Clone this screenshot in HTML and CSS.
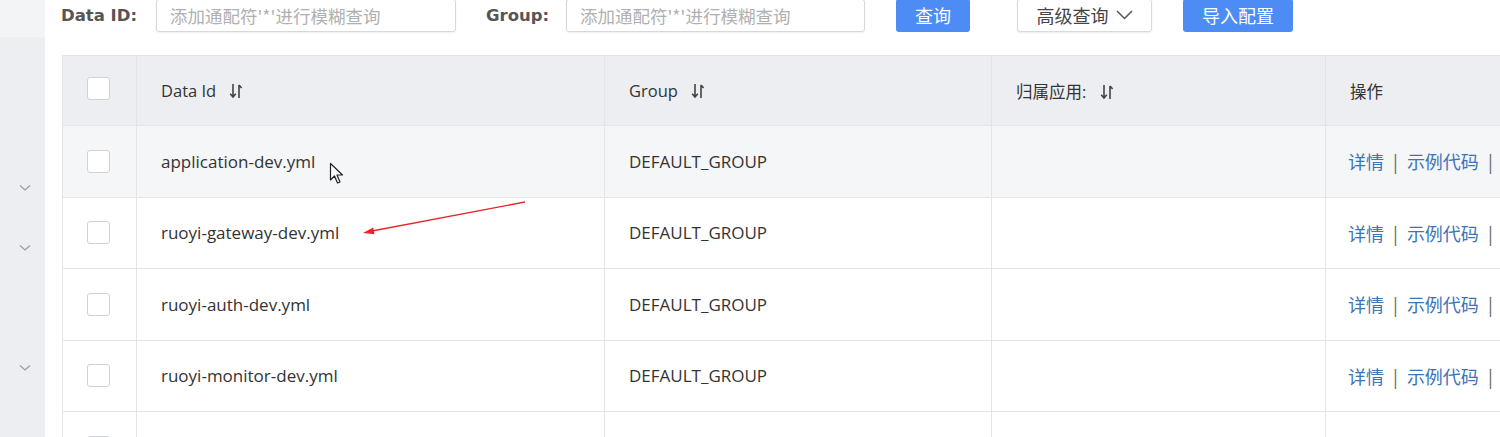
FILE: index.html
```html
<!DOCTYPE html>
<html>
<head>
<meta charset="utf-8">
<link rel="stylesheet" href="styles.css">
</head>
<body>
<div class="page">
  <aside class="sidebar">
    <div class="side-top"></div>
    <div class="side-body">
      <span class="chev c1"><svg width="12" height="8" viewBox="0 0 12 8"><path d="M1 1.5 L6 6 L11 1.5" fill="none" stroke="#9aa0a8" stroke-width="1.3"/></svg></span>
      <span class="chev c2"><svg width="12" height="8" viewBox="0 0 12 8"><path d="M1 1.5 L6 6 L11 1.5" fill="none" stroke="#9aa0a8" stroke-width="1.3"/></svg></span>
      <span class="chev c3"><svg width="12" height="8" viewBox="0 0 12 8"><path d="M1 1.5 L6 6 L11 1.5" fill="none" stroke="#9aa0a8" stroke-width="1.3"/></svg></span>
    </div>
  </aside>
  <main class="main">
    <div class="search">
      <label class="lbl">Data ID:</label>
      <div class="input w1">添加通配符'*'进行模糊查询</div>
      <label class="lbl lbl2">Group:</label>
      <div class="input w2">添加通配符'*'进行模糊查询</div>
      <button class="btn primary q">查询</button>
      <button class="btn adv">高级查询 <svg width="17" height="10" viewBox="0 0 17 10"><path d="M1 1 L8.5 8.5 L16 1" fill="none" stroke="#555" stroke-width="1.5"/></svg></button>
      <button class="btn primary imp">导入配置</button>
    </div>
    <div class="table-wrap">
      <table class="tbl">
        <colgroup>
          <col style="width:74px"><col style="width:468px"><col style="width:387px"><col style="width:334px"><col style="width:300px">
        </colgroup>
        <thead>
          <tr>
            <th class="cb"><span class="box"></span></th>
            <th>Data Id <span class="sort"><svg width="14" height="16" viewBox="0 0 14 16"><path d="M4 1 V14 M1.2 10.8 L4 14 L6.8 10.8" fill="none" stroke="#444" stroke-width="1.6"/><path d="M10 2 V15 M10 2 L12.6 5" fill="none" stroke="#444" stroke-width="1.6"/></svg></span></th>
            <th>Group <span class="sort"><svg width="14" height="16" viewBox="0 0 14 16"><path d="M4 1 V14 M1.2 10.8 L4 14 L6.8 10.8" fill="none" stroke="#444" stroke-width="1.6"/><path d="M10 2 V15 M10 2 L12.6 5" fill="none" stroke="#444" stroke-width="1.6"/></svg></span></th>
            <th>归属应用: <span class="sort"><svg width="14" height="16" viewBox="0 0 14 16"><path d="M4 1 V14 M1.2 10.8 L4 14 L6.8 10.8" fill="none" stroke="#444" stroke-width="1.6"/><path d="M10 2 V15 M10 2 L12.6 5" fill="none" stroke="#444" stroke-width="1.6"/></svg></span></th>
            <th>操作</th>
          </tr>
        </thead>
        <tbody>
          <tr class="hover">
            <td class="cb"><span class="box"></span></td>
            <td class="name">application-dev.yml<span class="cursor"><svg width="18" height="24" viewBox="0 0 18 24"><path d="M1.5 1.5 L1.5 18 L5.5 14 L8.5 21 L11 20 L8 13 L13.5 13 Z" fill="#fff" stroke="#222" stroke-width="1.2" stroke-linejoin="round"/></svg></span></td>
            <td>DEFAULT_GROUP</td>
            <td></td>
            <td class="ops"><a>详情</a><span class="sep">|</span><a>示例代码</a><span class="sep">|</span><a>删除</a></td>
          </tr>
          <tr>
            <td class="cb"><span class="box"></span></td>
            <td class="name">ruoyi-gateway-dev.yml</td>
            <td>DEFAULT_GROUP</td>
            <td></td>
            <td class="ops"><a>详情</a><span class="sep">|</span><a>示例代码</a><span class="sep">|</span><a>删除</a></td>
          </tr>
          <tr>
            <td class="cb"><span class="box"></span></td>
            <td class="name">ruoyi-auth-dev.yml</td>
            <td>DEFAULT_GROUP</td>
            <td></td>
            <td class="ops"><a>详情</a><span class="sep">|</span><a>示例代码</a><span class="sep">|</span><a>删除</a></td>
          </tr>
          <tr>
            <td class="cb"><span class="box"></span></td>
            <td class="name">ruoyi-monitor-dev.yml</td>
            <td>DEFAULT_GROUP</td>
            <td></td>
            <td class="ops"><a>详情</a><span class="sep">|</span><a>示例代码</a><span class="sep">|</span><a>删除</a></td>
          </tr>
          <tr>
            <td class="cb"><span class="box"></span></td>
            <td class="name">ruoyi-system-dev.yml</td>
            <td>DEFAULT_GROUP</td>
            <td></td>
            <td class="ops"><a>详情</a><span class="sep">|</span><a>示例代码</a><span class="sep">|</span><a>删除</a></td>
          </tr>
        </tbody>
      </table>
      <svg class="arrow" width="170" height="42" viewBox="0 0 170 42"><path d="M166 5 L13 34" stroke="#e8262a" stroke-width="1.3" fill="none"/><path d="M4 36 L14.1 30.5 L15.5 37.3 Z" fill="#e8262a"/></svg>
    </div>
  </main>
</div>
</body>
</html>
```

FILE: styles.css
```css
* { box-sizing: border-box; }
html, body { margin: 0; padding: 0; }
body {
  width: 1500px;
  height: 437px;
  overflow: hidden;
  background: #fff;
  font-family: "Open Sans", "Noto Sans CJK SC", sans-serif;
  color: #333;
}
.page { display: flex; height: 437px; }
.sidebar {
  width: 45px;
  flex: none;
  display: flex;
  flex-direction: column;
  background: #eceef2;
}
.side-top { height: 37px; background: #f3f4f6; }
.side-body { position: relative; flex: 1; }
.chev { position: absolute; left: 19px; line-height: 0; }
.c1 { top: 147px; }
.c2 { top: 207px; }
.c3 { top: 327px; }

.main { flex: 1; padding-left: 16px; min-width: 0; overflow: hidden; }
.search {
  display: flex;
  align-items: center;
  height: 32px;
  margin-top: -1px;
}
.lbl {
  font-family: "DejaVu Sans", "Noto Sans CJK SC", sans-serif;
  font-weight: bold;
  font-size: 16.5px;
  color: #555;
  width: 95px;
}
.lbl2 { margin-left: 30px; width: 80px; }
.input {
  height: 33px;
  border: 1px solid #d6d8dc;
  border-radius: 3px;
  font-family: "Noto Sans CJK SC", sans-serif;
  font-size: 17.5px;
  color: #b0b0b0;
  padding: 3px 0 0 13px;
  box-shadow: 0 1px 2px rgba(0,0,0,0.06);
  white-space: nowrap;
  overflow: hidden;
}
.w1 { width: 300px; }
.w2 { width: 299px; }
.btn {
  height: 33px;
  border-radius: 3px;
  font-family: "Noto Sans CJK SC", sans-serif;
  font-size: 18px;
  padding: 0;
  border: none;
}
.primary { background: #4d8cf5; color: #fff; }
.q { width: 74px; margin-left: 31px; }
.adv {
  width: 135px;
  margin-left: 47px;
  background: #fff;
  color: #444;
  border: 1px solid #d8dadd;
  box-shadow: 0 1px 2px rgba(0,0,0,0.08);
  display: flex;
  align-items: center;
  justify-content: center;
  gap: 7px;
}
.imp { width: 110px; margin-left: 31px; }

.table-wrap { position: relative; margin-top: 24px; padding-left: 1px; }
.tbl {
  border-collapse: collapse;
  table-layout: fixed;
  width: 1563px;
  font-size: 17px;
  border-top: 1px solid #e3e5e8;
  border-left: 1px solid #e3e5e8;
}
.tbl th, .tbl td {
  text-align: left;
  font-weight: normal;
  padding: 0 0 0 24px;
  border-right: 1px solid #e3e5e8;
  border-bottom: 1px solid #e3e5e8;
  white-space: nowrap;
  overflow: hidden;
}
.tbl th {
  height: 70px;
  background: #eceef2;
  color: #333;
  font-size: 16.5px;
}
.tbl td { height: 71.5px; color: #333; }
.tbl tr.hover td { background: #f5f6f8; }
.tbl .name { overflow: visible; }
.box {
  display: block;
  width: 23px;
  height: 23px;
  border: 1px solid #cfd2d6;
  border-radius: 3px;
  background: #fff;
}
th .box { margin-top: -4px; }
.sort { display: inline-block; vertical-align: -2px; margin-left: 9px; line-height: 0; }
.name { position: relative; }
.cursor { position: absolute; left: 192px; top: 36px; line-height: 0; }
.ops { font-family: "Noto Sans CJK SC", sans-serif; font-size: 18px; padding-left: 22px !important; }
.ops a { color: #3b74b8; }
.sep { color: #666; margin: 0 9px; }
.arrow { position: absolute; left: 298px; top: 142px; }
```
